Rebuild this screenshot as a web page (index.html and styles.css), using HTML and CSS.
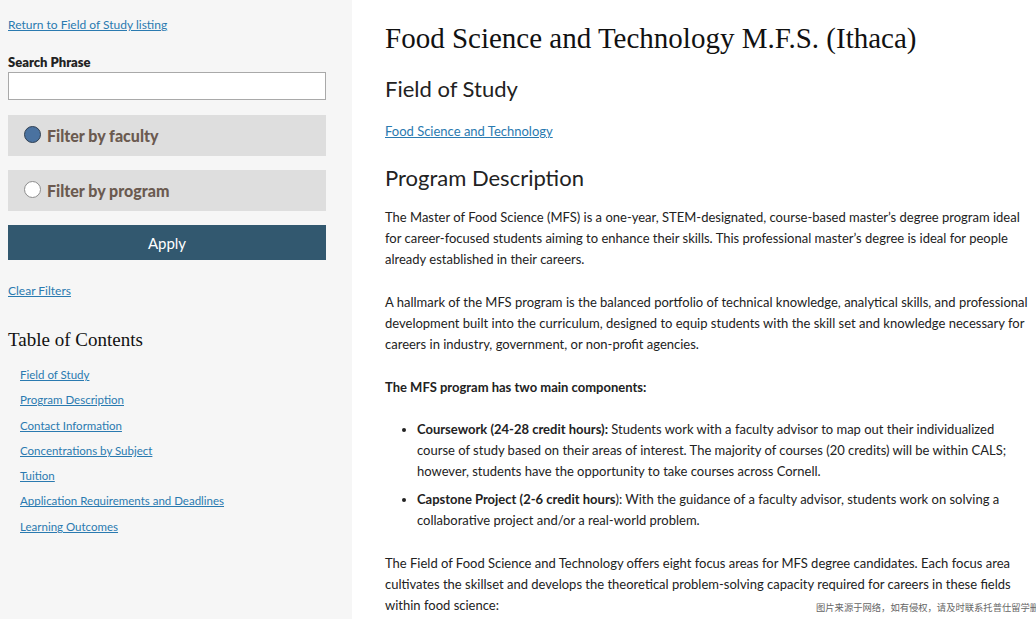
FILE: index.html
```html
<!DOCTYPE html>
<html lang="en">
  <head>
    <meta charset="utf-8" />
    <link rel="stylesheet" href="styles.css">
  </head>

  <body>
    <div class="page">
      <aside class="sidebar">
        <a class="backLink" href="#">Return to Field of Study listing</a>

        <form class="filters">
          <label class="searchLabel" for="search">Search Phrase</label>
          <input id="search" class="searchInput" type="text" />

          <label class="filterBox">
            <span class="radio checked"></span>
            <span>Filter by faculty</span>
          </label>
          <label class="filterBox">
            <span class="radio"></span>
            <span>Filter by program</span>
          </label>

          <button type="button" class="applyBtn">Apply</button>
        </form>

        <a class="clearLink" href="#">Clear Filters</a>

        <h2 class="tocTitle">Table of Contents</h2>
        <ul class="toc">
          <li><a href="#">Field of Study</a></li>
          <li><a href="#">Program Description</a></li>
          <li><a href="#">Contact Information</a></li>
          <li><a href="#">Concentrations by Subject</a></li>
          <li><a href="#">Tuition</a></li>
          <li><a href="#">Application Requirements and Deadlines</a></li>
          <li><a href="#">Learning Outcomes</a></li>
        </ul>
      </aside>

      <main class="content">
        <h1 class="title">Food Science and Technology M.F.S. (Ithaca)</h1>

        <h2 class="section">Field of Study</h2>
        <p class="fieldLink"><a href="#">Food Science and Technology</a></p>

        <h2 class="section">Program Description</h2>
        <p>The Master of Food Science (MFS) is a one-year, STEM-designated, course-based master’s degree program ideal for career-focused students aiming to enhance their skills. This professional master’s degree is ideal for people already established in their careers.</p>
        <p>A hallmark of the MFS program is the balanced portfolio of technical knowledge, analytical skills, and professional development built into the curriculum, designed to equip students with the skill set and knowledge necessary for careers in industry, government, or non-profit agencies.</p>
        <p><strong>The MFS program has two main components:</strong></p>
        <ul class="components">
          <li><strong>Coursework (24-28 credit hours):</strong> Students work with a faculty advisor to map out their individualized course of study based on their areas of interest. The majority of courses (20 credits) will be within CALS; however, students have the opportunity to take courses across Cornell.</li>
          <li><strong>Capstone Project (2-6 credit hours</strong>): With the guidance of a faculty advisor, students work on solving a collaborative project and/or a real-world problem.</li>
        </ul>
        <p>The Field of Food Science and Technology offers eight focus areas for MFS degree candidates. Each focus area cultivates the skillset and develops the theoretical problem-solving capacity required for careers in these fields within food science:</p>
      </main>
    </div>

    <div class="watermark">图片来源于网络，如有侵权，请及时联系托普仕留学删除</div>
  </body>
</html>
```

FILE: styles.css
```css
html,
body {
  margin: 0;
  padding: 0;
  overflow: hidden;
}
body {
  font-family: Lato, "Open Sans", sans-serif;
  color: #222222;
  background-color: #ffffff;
}
a {
  color: #2a7ab0;
}

.page {
  display: flex;
  width: 1100px;
  min-height: 619px;
}

/* sidebar */
.sidebar {
  width: 352px;
  flex-shrink: 0;
  box-sizing: border-box;
  padding: 16px 26px 0 8px;
  background-color: #f6f6f6;
}
.backLink {
  display: block;
  font-size: 12px;
  line-height: 18px;
}
.filters {
  display: flex;
  flex-direction: column;
  margin-top: 20px;
}
.searchLabel {
  font-size: 13px;
  font-weight: 800;
  line-height: 16px;
  color: #222222;
}
.searchInput {
  height: 28px;
  box-sizing: border-box;
  margin: 2px 0 15px 0;
  border: 1px solid #a9a9a9;
  background-color: #ffffff;
}
.filterBox {
  display: flex;
  align-items: center;
  gap: 6px;
  height: 41px;
  margin-bottom: 14px;
  padding-left: 16px;
  background-color: #dedede;
  font-size: 16px;
  font-weight: 900;
  color: #6b5a50;
}
.radio {
  width: 15px;
  height: 15px;
  border: 1px solid #8d8d8d;
  border-radius: 50%;
  background-color: #ffffff;
  margin-top: -3px;
}
.radio.checked {
  background-color: #4a72a0;
  border-color: #2f3f52;
}
.applyBtn {
  height: 35px;
  border: none;
  background-color: #32586f;
  color: #ffffff;
  font-family: inherit;
  font-size: 15px;
}
.clearLink {
  display: block;
  margin-top: 22px;
  font-size: 12px;
  line-height: 18px;
}
.tocTitle {
  margin: 28px 0 0 0;
  font-family: "Liberation Serif", serif;
  font-weight: normal;
  font-size: 19px;
  line-height: 24px;
  color: #111111;
}
.toc {
  list-style: none;
  margin: 15px 0 0 0;
  padding: 0 0 0 12px;
}
.toc li {
  font-size: 11.5px;
  line-height: 16px;
  margin-bottom: 9.3px;
}

/* main column */
.content {
  width: 648px;
  padding: 18px 0 0 33px;
  font-size: 13px;
  line-height: 21px;
}
.title {
  margin: 0;
  font-family: "Liberation Serif", serif;
  font-weight: normal;
  font-size: 29px;
  line-height: 40px;
  color: #111111;
}
.section {
  margin: 17px 0 0 0;
  font-weight: normal;
  font-size: 22px;
  line-height: 28px;
}
.content p {
  margin: 22px 0 0 0;
}
.content .section + p {
  margin-top: 15px;
}
.content .section + .fieldLink {
  margin-top: 18px;
  font-size: 13px;
}
.content .fieldLink + .section {
  margin-top: 22px;
}
.components {
  margin: 21px 0 0 0;
  padding-left: 32px;
}
.components li {
  margin-bottom: 7px;
}
.content .components + p {
  margin-top: 22px;
}

.watermark {
  position: absolute;
  left: 816px;
  top: 600px;
  font-family: "Noto Sans CJK SC", sans-serif;
  font-size: 9.3px;
  line-height: 14px;
  color: #666666;
  white-space: nowrap;
}
```
